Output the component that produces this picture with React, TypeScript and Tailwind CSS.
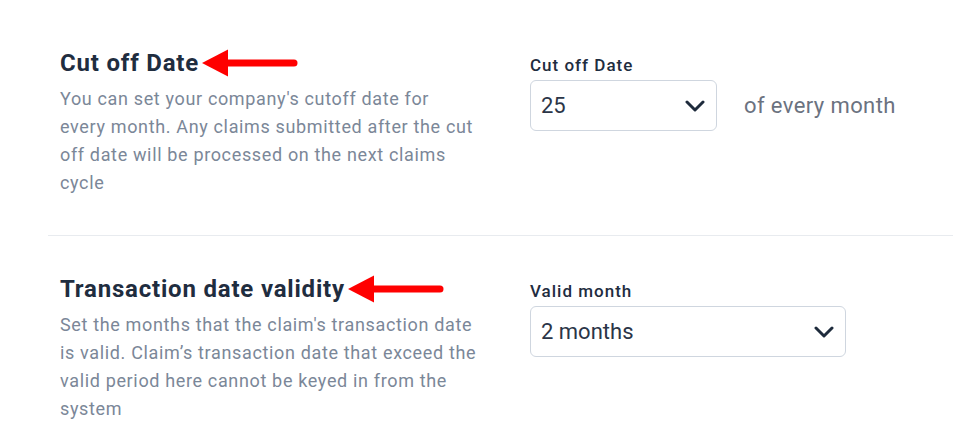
function Arrow() {
  return (
    <svg width="96" height="28" viewBox="0 0 96 28" className="ml-[3px] shrink-0">
      <polygon points="0,14 26,0.5 26,27.5" fill="#ff0000" />
      <line x1="24" y1="14" x2="92" y2="14" stroke="#ff0000" strokeWidth="7" strokeLinecap="round" />
    </svg>
  );
}

function Chevron() {
  return (
    <svg width="20" height="12" viewBox="0 0 20 12" className="shrink-0">
      <polyline
        points="2,2 10,10 18,2"
        fill="none"
        stroke="#1e2b3c"
        strokeWidth="3"
        strokeLinecap="round"
        strokeLinejoin="round"
      />
    </svg>
  );
}

function Select({ value, width }: { value: string; width: string }) {
  return (
    <div
      className={`flex h-[51px] items-center justify-between rounded-md border border-[#cfd6df] bg-white pl-[10px] pr-[11px] ${width}`}
    >
      <span className="text-[22px] text-[#2b3547]">{value}</span>
      <Chevron />
    </div>
  );
}

export default function App() {
  return (
    <div className="h-[447px] w-[953px] overflow-hidden bg-white font-['Roboto',sans-serif]">
      <section className="flex pb-[38px] pl-[60px] pt-[49px]">
        <div className="w-[470px]">
          <div className="flex h-[28px] items-center">
            <h2 className="text-[24px] font-bold leading-[28px] tracking-[0.8px] text-[#1f2d3f]">Cut off Date</h2>
            <Arrow />
          </div>
          <p className="mt-2 w-[420px] text-[18px] leading-[28px] tracking-[0.65px] text-[#7b8798]">
            You can set your company's cutoff date for
            <br />
            every month. Any claims submitted after the cut off date will be processed on the next
            claims cycle
          </p>
        </div>
        <div className="pt-[4px]">
          <label className="block text-[17px] font-medium leading-[24px] tracking-[1px] text-[#1f2d3f]">
            Cut off Date
          </label>
          <div className="mt-[3px] flex items-center">
            <Select value="25" width="w-[187px]" />
            <span className="ml-[27px] text-[22px] tracking-[0.4px] text-[#6b7280]">of every month</span>
          </div>
        </div>
      </section>
      <div className="ml-12 h-px bg-[#e8ebef]" />
      <section className="flex pb-[39px] pl-[60px] pt-[39px]">
        <div className="w-[470px]">
          <div className="flex h-[28px] items-center">
            <h2 className="text-[24px] font-bold leading-[28px] tracking-[0.8px] text-[#1f2d3f]">
              Transaction date validity
            </h2>
            <Arrow />
          </div>
          <p className="mt-2 w-[420px] text-[18px] leading-[28px] tracking-[0.65px] text-[#7b8798]">
            Set the months that the claim's transaction date is valid. Claim’s transaction date that
            exceed the valid period here cannot be keyed in from the system
          </p>
        </div>
        <div className="pt-[4px]">
          <label className="block text-[17px] font-medium leading-[24px] tracking-[1px] text-[#1f2d3f]">
            Valid month
          </label>
          <div className="mt-[3px] flex items-center">
            <Select value="2 months" width="w-[316px]" />
          </div>
        </div>
      </section>
    </div>
  );
}
